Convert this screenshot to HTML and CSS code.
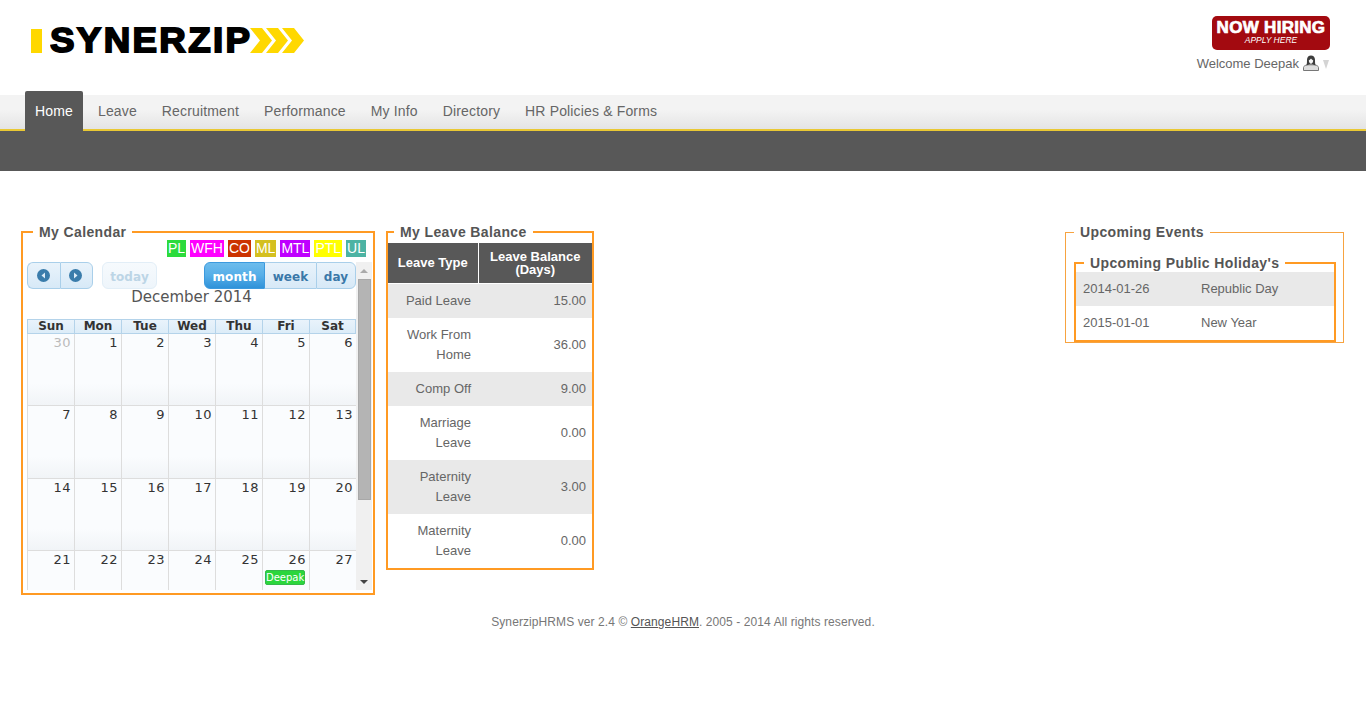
FILE: index.html
```html
<!DOCTYPE html>
<html lang="en">
<head>
<meta charset="utf-8">
<title>SynerzipHRMS</title>
<link rel="stylesheet" href="styles.css">
</head>
<body>
<header class="top">
  <div class="logo">
    <span class="logo-bar"></span>
    <span class="logo-text">SYNERZIP</span>
    <svg class="logo-arrows" width="54" height="25" viewBox="0 0 54 25" aria-hidden="true">
      <path d="M0 0h12l10 12.500-10 12.500H0l10-12.500z"/>
      <path d="M16 0h12l10 12.500-10 12.500H16l10-12.500z"/>
      <path d="M32 0h12l10 12.500-10 12.500H32l10-12.500z"/>
    </svg>
  </div>
  <div class="account">
    <a class="hiring"><span class="hiring-main">NOW HIRING</span><span class="hiring-sub">APPLY HERE</span></a>
    <div class="welcome">
      <span>Welcome Deepak</span>
      <svg width="16" height="16" viewBox="0 0 16 16" aria-hidden="true">
        <path d="M.5 15.500v-3c0-1.300 1.500-2 3.500-2.700h8c2 .7 3.500 1.400 3.500 2.700v3z" fill="#dedede" stroke="#777"/>
        <path d="M3.500 10.500C4 8.500 4 6.500 4 4.800 4 2 5.800.5 8 .5s4 1.500 4 4.300c0 1.700 0 3.700.5 5.700-1.500-.4-2.500-.8-3-1.200h-3c-.5.4-1.500.8-3 1.200z" fill="#3d3d3d"/>
        <path d="M5.800 5.200c.9-.2 1.700-.9 2.200-1.700.5.8 1.300 1.500 2.200 1.700-.1 2-1 3.600-2.200 3.600S5.900 7.200 5.800 5.200z" fill="#f4f4f4"/>
      </svg>
      <span class="caret"></span>
    </div>
  </div>
</header>

<nav class="nav">
  <ul class="nav-list">
    <li class="nav-item active">Home</li>
    <li class="nav-item">Leave</li>
    <li class="nav-item">Recruitment</li>
    <li class="nav-item">Performance</li>
    <li class="nav-item">My Info</li>
    <li class="nav-item">Directory</li>
    <li class="nav-item">HR Policies &amp; Forms</li>
  </ul>
</nav>
<div class="subnav"></div>

<main class="panels">
  <fieldset class="box box-calendar">
    <legend class="legend-cal">My Calendar</legend>
    <div class="chips">
      <span class="chip c-pl">PL</span>
      <span class="chip c-wfh">WFH</span>
      <span class="chip c-co">CO</span>
      <span class="chip c-ml">ML</span>
      <span class="chip c-mtl">MTL</span>
      <span class="chip c-ptl">PTL</span>
      <span class="chip c-ul">UL</span>
    </div>
    <div class="cal-frame">
      <div class="cal">
        <div class="toolbar">
          <div class="btn-group">
            <button class="fc-btn icon-btn"><svg width="13" height="13" viewBox="0 0 13 13" aria-hidden="true"><circle cx="6.500" cy="6.500" r="6.500" fill="#3a7cab"/><path d="M8 3.500v6L4.500 6.500z" fill="#dcebf7"/></svg></button>
            <button class="fc-btn icon-btn"><svg width="13" height="13" viewBox="0 0 13 13" aria-hidden="true"><circle cx="6.500" cy="6.500" r="6.500" fill="#3a7cab"/><path d="M5 3.500v6l3.500-3z" fill="#dcebf7"/></svg></button>
          </div>
          <button class="fc-btn today">today</button>
          <div class="btn-group views">
            <button class="fc-btn view-month">month</button>
            <button class="fc-btn view-week">week</button>
            <button class="fc-btn view-day">day</button>
          </div>
        </div>
        <h2 class="cal-title">December 2014</h2>
        <div class="cal-head">
          <span>Sun</span><span>Mon</span><span>Tue</span><span>Wed</span><span>Thu</span><span>Fri</span><span>Sat</span>
        </div>
        <div class="cal-grid">
          <div class="day muted">30</div><div class="day">1</div><div class="day">2</div><div class="day">3</div><div class="day">4</div><div class="day">5</div><div class="day">6</div>
          <div class="day">7</div><div class="day">8</div><div class="day">9</div><div class="day">10</div><div class="day">11</div><div class="day">12</div><div class="day">13</div>
          <div class="day">14</div><div class="day">15</div><div class="day">16</div><div class="day">17</div><div class="day">18</div><div class="day">19</div><div class="day">20</div>
          <div class="day">21</div><div class="day">22</div><div class="day">23</div><div class="day">24</div><div class="day">25</div><div class="day">26<span class="event">Deepak</span></div><div class="day">27</div>
        </div>
      </div>
      <div class="scrollbar">
        <span class="arrow arrow-up"></span>
        <span class="thumb"></span>
        <span class="arrow arrow-down"></span>
      </div>
    </div>
  </fieldset>

  <fieldset class="box box-balance">
    <legend class="legend-bal">My Leave Balance</legend>
    <table class="balance">
      <thead>
        <tr><th class="col-type">Leave Type</th><th class="col-bal">Leave Balance<br>(Days)</th></tr>
      </thead>
      <tbody>
        <tr class="odd"><td>Paid Leave</td><td class="num">15.00</td></tr>
        <tr><td>Work From<br>Home</td><td class="num">36.00</td></tr>
        <tr class="odd"><td>Comp Off</td><td class="num">9.00</td></tr>
        <tr><td>Marriage<br>Leave</td><td class="num">0.00</td></tr>
        <tr class="odd"><td>Paternity<br>Leave</td><td class="num">3.00</td></tr>
        <tr><td>Maternity<br>Leave</td><td class="num">0.00</td></tr>
      </tbody>
    </table>
  </fieldset>

  <fieldset class="box-thin">
    <legend class="legend-outer">Upcoming Events</legend>
    <fieldset class="box box-holiday">
      <legend class="legend-ev">Upcoming Public Holiday's</legend>
      <div class="holiday odd"><span class="h-date">2014-01-26</span><span>Republic Day</span></div>
      <div class="holiday"><span class="h-date">2015-01-01</span><span>New Year</span></div>
    </fieldset>
  </fieldset>
</main>

<footer class="foot">SynerzipHRMS ver 2.4 © <a class="foot-link">OrangeHRM</a>. 2005 - 2014 All rights reserved.</footer>
</body>
</html>
```
FILE: styles.css
```css
* { box-sizing: border-box; }
html, body { margin: 0; padding: 0; }
body { background: #fff; color: #666; font-family: "Liberation Sans", Arial, sans-serif; font-size: 13px; }

.top { height: 95px; display: flex; justify-content: space-between; padding: 16px 36px 0 31px; }
.logo { display: flex; align-items: flex-start; margin-top: 11px; height: 28px; }
.logo-bar { width: 11px; height: 24px; background: #ffd800; margin-top: 2px; margin-right: 8px; }
.logo-text { font-size: 35px; line-height: 26px; font-weight: 700; color: #000; letter-spacing: 2.200px; -webkit-text-stroke: 1.800px #000; width: 200px; white-space: nowrap; transform: scaleX(1.05); transform-origin: left center; }
.logo-arrows { fill: #ffd800; margin-top: 1px; }

.account { display: flex; flex-direction: column; align-items: flex-end; }
.hiring { width: 118px; height: 34px; background: #a30a10; border-radius: 5px; color: #fff; display: flex; flex-direction: column; align-items: center; }
.hiring-main { font-size: 17px; line-height: 15px; margin-top: 4px; font-weight: 700; letter-spacing: .3px; -webkit-text-stroke: .7px #fff; white-space: nowrap; }
.hiring-sub { font-size: 8.500px; line-height: 10px; font-style: italic; }
.welcome { display: flex; align-items: center; margin: 4px 1px 0 0; height: 18px; color: #666; white-space: nowrap; }
.welcome svg { margin-left: 4px; }
.caret { width: 0; height: 0; margin: 3px 0 0 4px; border-left: 3.500px solid transparent; border-right: 3.500px solid transparent; border-top: 9px solid #d4d4d4; }

.nav { height: 36px; background: linear-gradient(#f3f3f3 45%, #e4e4e4); border-bottom: 2px solid #e9c834; padding-left: 25px; }
.nav-list { display: flex; list-style: none; margin: 0; padding: 0; }
.nav-item { height: 40px; margin: -4px 5px -2px 0; padding: 0 10px; font-size: 14px; line-height: 40px; letter-spacing: .15px; color: #666; white-space: nowrap; }
.nav-item.active { background: #585858; color: #fff; border-radius: 2px 2px 0 0; }
.subnav { height: 40px; background: #585858; }

.panels { display: flex; align-items: flex-start; gap: 11px; padding: 52px 22px 0 21px; }

fieldset { margin: 0; padding: 0; min-width: 0; }
legend { font-size: 14px; line-height: 18px; font-weight: 700; letter-spacing: .38px; color: #555; padding: 0 6px; white-space: nowrap; }
.legend-cal { margin-left: 6px; }
.legend-bal { margin-left: 6px; }
.legend-ev { margin-left: 8px; }
.legend-outer { margin-left: 0; }
.box { border: 2px solid #ff9a23; }
.box-thin { border: 1px solid #f7a340; width: 279px; margin-left: auto; padding: 13px 7px 0 8px; }

.box-calendar { width: 354px; height: 372px; padding: 0 1px 0 4px; }
.chips { display: flex; justify-content: flex-end; gap: 4px; height: 22px; padding-right: 6px; margin-top: -1px; }
.chip { height: 17px; line-height: 17px; font-size: 14px; color: #fff; padding: 0 1px; }
.c-pl { background: #2bdb3c; }
.c-wfh { background: #ff00ff; }
.c-co { background: #cc3300; }
.c-ml { background: #d4c020; }
.c-mtl { background: #bf00ff; }
.c-ptl { background: #ffff00; }
.c-ul { background: #4cb3a3; }

.cal-frame { display: flex; height: 328px; }
.cal { width: 329px; height: 328px; flex: none; overflow: hidden; font-family: "DejaVu Sans", Verdana, sans-serif; }
.toolbar { display: flex; align-items: flex-start; height: 27px; }
.btn-group { display: flex; }
.views { margin-left: auto; }
.fc-btn { height: 27px; margin: 0; padding: 2px 0 0; border: 1px solid #a9cfea; background: linear-gradient(#e9f3fb, #d7e9f7); color: #3a78a8; font-family: inherit; font-size: 12px; font-weight: 700; letter-spacing: .1px; display: flex; align-items: center; justify-content: center; }
.icon-btn { width: 33px; padding: 0 2px 0 0; }
.icon-btn:first-child { border-radius: 6px 0 0 6px; border-right: 0; }
.icon-btn:last-child { border-radius: 0 6px 6px 0; }
.today { width: 55px; margin-left: 9px; border-radius: 6px; border-color: #e2eef7; background: linear-gradient(#f6fafd, #eef5fb); color: #bcd5e6; }
.view-month { width: 61px; border-radius: 6px 0 0 6px; border-color: #3c9ade; background: linear-gradient(#6dbcec, #55aee8 50%, #2f92d9); color: #fff; }
.view-week { width: 51px; border-left: 0; border-right: 0; }
.view-day { width: 40px; border-radius: 0 6px 6px 0; }
.cal-title { margin: 0; height: 30px; padding-top: 1px; font-size: 15px; line-height: 15px; font-weight: 400; color: #555; text-align: center; }
.cal-head { display: grid; grid-template-columns: repeat(7, 47px); height: 15px; }
.cal-head span { height: 15px; border: 1px solid #b4d3ea; border-right: 0; background: linear-gradient(#e9f3fb, #dcecf8); text-align: center; font-size: 12px; line-height: 13px; font-weight: 700; color: #333; }
.cal-head span:last-child { border-right: 1px solid #b4d3ea; }
.cal-grid { display: grid; grid-template-columns: repeat(7, 47px); grid-auto-rows: 72.300px; }
.day { position: relative; border-left: 1px solid #ddd; border-bottom: 1px solid #ddd; background: linear-gradient(#fafcfe 0, #fafcfe 70%, #f1f4f7 100%); padding: 1px 3px 0 0; text-align: right; font-size: 13px; line-height: 15px; letter-spacing: .5px; color: #333; }
.day.muted { color: #bbb; }
.event { position: absolute; left: 2px; top: 19px; width: 40px; height: 15px; background: #2bd63c; border: 1px solid #35b84a; border-radius: 2px; color: #fff; font-size: 10px; line-height: 13px; letter-spacing: 0; text-align: center; }

.scrollbar { width: 16px; height: 328px; flex: none; background: #f0f0f0; position: relative; }
.thumb { position: absolute; left: 2px; top: 17px; width: 13px; height: 221px; background: #b4b4b4; border: 1px solid #a8a8a8; }
.arrow { position: absolute; left: 4px; width: 0; height: 0; border-left: 4px solid transparent; border-right: 4px solid transparent; }
.arrow-up { top: 7px; border-bottom: 4px solid #aaa; }
.arrow-down { bottom: 6px; border-top: 4px solid #444; }

.box-balance { width: 208px; padding-top: 2px; }
.balance { width: 204px; border-collapse: collapse; table-layout: fixed; font-size: 13px; }
.balance th { height: 40px; padding: 0 0 1px; background: #585858; color: #fff; font-weight: 700; line-height: 13px; border-bottom: 1px solid #fff; text-align: center; }
.balance .col-bal { padding: 1px 0 0; }
.col-type { width: 90px; border-right: 1px solid #fff; }
.balance td { padding: 7px 7px 7px 0; line-height: 20px; text-align: right; color: #666; }
.balance .num { padding-right: 6px; }
.balance .odd td { background: #e9e9e9; }

.box-holiday { width: 262px; padding-top: 0; }
.holiday { display: flex; height: 34px; align-items: center; padding: 0 0 2px 7px; color: #666; }
.holiday.odd { background: #e9e9e9; }
.h-date { width: 118px; }

.foot { margin-top: 19px; text-align: center; font-size: 12px; line-height: 16px; letter-spacing: .09px; color: #777; }
.foot-link { text-decoration: underline; color: #555; }
```
